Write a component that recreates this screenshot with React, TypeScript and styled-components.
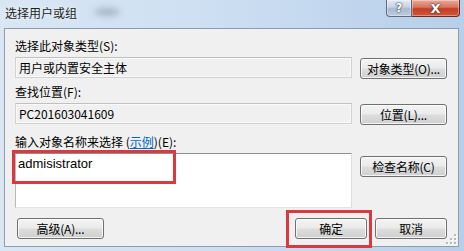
import React, { FC } from 'react';
import styled, { createGlobalStyle } from 'styled-components';

const GlobalStyle = createGlobalStyle`
  html, body {
    margin: 0;
    padding: 0;
    background: #ffffff;
  }
  body {
    font-family: "Noto Sans CJK SC", "DejaVu Sans", sans-serif;
    font-size: 12px;
    color: #000;
  }
`;

const Window = styled.div`
  width: 464px;
  height: 251px;
  box-sizing: border-box;
  display: flex;
  flex-direction: column;
  padding: 0 5px 4px 4px;
  background: linear-gradient(90deg, #d9e6f4 0%, #cddff2 45%, #b7cfea 100%);
  overflow: hidden;
`;

const TitleBar = styled.div`
  height: 28px;
  display: flex;
  align-items: flex-start;
  position: relative;
`;

const Title = styled.div`
  margin-top: 5px;
  margin-left: 1px;
  font-size: 12px;
  line-height: 16px;
  color: #1e1e1e;
  text-shadow: 0 0 6px rgba(255, 255, 255, 0.9);
`;

// frosted glass smudge behind the title
const GlassSmudge = styled.div`
  position: absolute;
  left: 90px;
  top: 8px;
  width: 26px;
  height: 8px;
  border-radius: 50%;
  background: rgba(90, 100, 115, 0.35);
  filter: blur(3px);
`;

const Spacer = styled.div`
  flex: 1;
`;

const CaptionButtons = styled.div`
  display: flex;
  height: 18px;
  margin-right: -1px;
`;

const CaptionButton = styled.div<{ $kind: 'help' | 'close' }>`
  width: ${p => (p.$kind === 'help' ? '26px' : '48px')};
  height: 17px;
  display: flex;
  align-items: center;
  justify-content: center;
  box-sizing: border-box;
  border: 1px solid ${p => (p.$kind === 'help' ? '#5d6b80' : '#6b2a22')};
  border-top: none;
  border-left: ${p => (p.$kind === 'close' ? 'none' : undefined)};
  border-radius: ${p => (p.$kind === 'help' ? '0 0 0 4px' : '0 0 4px 0')};
  background: ${p =>
    p.$kind === 'help'
      ? 'linear-gradient(#e4ebf3 0%, #c6d2e1 45%, #a9b9cf 55%, #bfcde0 100%)'
      : 'linear-gradient(#e9a99b 0%, #d9735c 45%, #c23e25 55%, #d1583c 100%)'};
  box-shadow: inset 0 0 0 1px rgba(255, 255, 255, 0.35);
  color: #fff;
  font-family: "DejaVu Sans", sans-serif;
  font-weight: bold;
  font-size: ${p => (p.$kind === 'help' ? '12px' : '13px')};
  line-height: 1;
  text-shadow: 0 0 2px #2a3142, 0 0 1px #2a3142;
`;

const Client = styled.div`
  flex: 1;
  position: relative;
  box-sizing: border-box;
  background: #f0f0f0;
  border: 1px solid #8d9db0;
  padding: 9px 11px 0 10px;
  display: flex;
  flex-direction: column;
`;

const Label = styled.div<{ $mt?: number }>`
  margin-top: ${p => p.$mt ?? 0}px;
  height: 16px;
  line-height: 16px;
  white-space: nowrap;
`;

const Link = styled.span`
  color: #0066cc;
  text-decoration: underline;
`;

const FieldRow = styled.div<{ $mt?: number }>`
  margin-top: ${p => p.$mt ?? 3}px;
  display: grid;
  grid-template-columns: 337px 87px;
  column-gap: 8px;
  align-items: start;
`;

const ReadOnlyBox = styled.div`
  height: 21px;
  box-sizing: border-box;
  border: 1px solid #d2d2d2;
  border-top-color: #c0c0c0;
  background: #f0f0f0;
  box-shadow: inset 0 0 0 1px #f9f9f9;
  padding: 0 3px;
  line-height: 19px;
  white-space: nowrap;
`;

const InputArea = styled.div`
  position: relative;
  height: 55px;
  box-sizing: border-box;
  border: 1px solid;
  border-color: #8f8f8f #dedede #e3e3e3 #b9b9b9;
  background: #ffffff;
  padding: 2px 2px;
  font-family: "Liberation Sans", Arial, sans-serif;
  font-size: 13px;
  line-height: 16px;
`;

const Highlight = styled.div<{ $l: number; $t: number; $w: number; $h: number }>`
  position: absolute;
  left: ${p => p.$l}px;
  top: ${p => p.$t}px;
  width: ${p => p.$w}px;
  height: ${p => p.$h}px;
  box-sizing: border-box;
  border: 3px solid #d93a3f;
  pointer-events: none;
`;

const Button = styled.div<{ $w?: number; $mt?: number }>`
  position: relative;
  width: ${p => (p.$w ? `${p.$w}px` : 'auto')};
  margin-top: ${p => p.$mt ?? 0}px;
  height: 21px;
  box-sizing: border-box;
  border: 1px solid #707070;
  border-radius: 3px;
  background: linear-gradient(#f3f3f3 0%, #ebebeb 48%, #dddddd 52%, #cfcfcf 100%);
  box-shadow: inset 0 0 0 1px rgba(255, 255, 255, 0.75);
  display: flex;
  align-items: center;
  justify-content: center;
  white-space: nowrap;
  font-size: 12px;
  line-height: 16px;
  letter-spacing: -0.2px;
`;

const Footer = styled.div`
  margin-top: 10px;
  display: flex;
  align-items: flex-start;
`;

const FooterRight = styled.div`
  margin-left: auto;
  display: flex;
  gap: 8px;
`;

const Grip = styled.svg`
  position: absolute;
  right: 1px;
  bottom: 1px;
`;

const GripDots: FC = () => {
  const dots: [number, number][] = [
    [8, 0],
    [8, 4],
    [4, 4],
    [8, 8],
    [4, 8],
    [0, 8],
  ];
  return (
    <Grip width="11" height="11" viewBox="0 0 11 11">
      {dots.map(([x, y]) => (
        <g key={`${x}-${y}`}>
          <rect x={x + 1} y={y + 1} width="2" height="2" fill="#ffffff" />
          <rect x={x} y={y} width="2" height="2" fill="#b8b8b8" />
        </g>
      ))}
    </Grip>
  );
};

const App: FC = () => (
  <>
    <GlobalStyle />
    <Window>
      <TitleBar>
        <Title>选择用户或组</Title>
        <GlassSmudge />
        <Spacer />
        <CaptionButtons>
          <CaptionButton $kind="help">?</CaptionButton>
          <CaptionButton $kind="close">X</CaptionButton>
        </CaptionButtons>
      </TitleBar>
      <Client>
        <Label>选择此对象类型(S):</Label>
        <FieldRow>
          <ReadOnlyBox>用户或内置安全主体</ReadOnlyBox>
          <Button $mt={1}>对象类型(O)...</Button>
        </FieldRow>

        <Label $mt={5}>查找位置(F):</Label>
        <FieldRow>
          <ReadOnlyBox>PC201603041609</ReadOnlyBox>
          <Button $mt={1}>位置(L)...</Button>
        </FieldRow>

        <Label $mt={9}>
          输入对象名称来选择 (<Link>示例</Link>)(E):
        </Label>
        <FieldRow>
          <InputArea>
            admisistrator
            <Highlight $l={-4} $t={-4} $w={164} $h={34} />
          </InputArea>
          <Button $mt={3}>检查名称(C)</Button>
        </FieldRow>

        <Footer>
          <Button $w={87} style={{ marginLeft: 2 }}>
            高级(A)...
          </Button>
          <FooterRight>
            <Button $w={72}>
              确定
              <Highlight $l={-10} $t={-9} $w={86} $h={38} />
            </Button>
            <Button $w={72}>取消</Button>
          </FooterRight>
        </Footer>
        <GripDots />
      </Client>
    </Window>
  </>
);

export default App;
